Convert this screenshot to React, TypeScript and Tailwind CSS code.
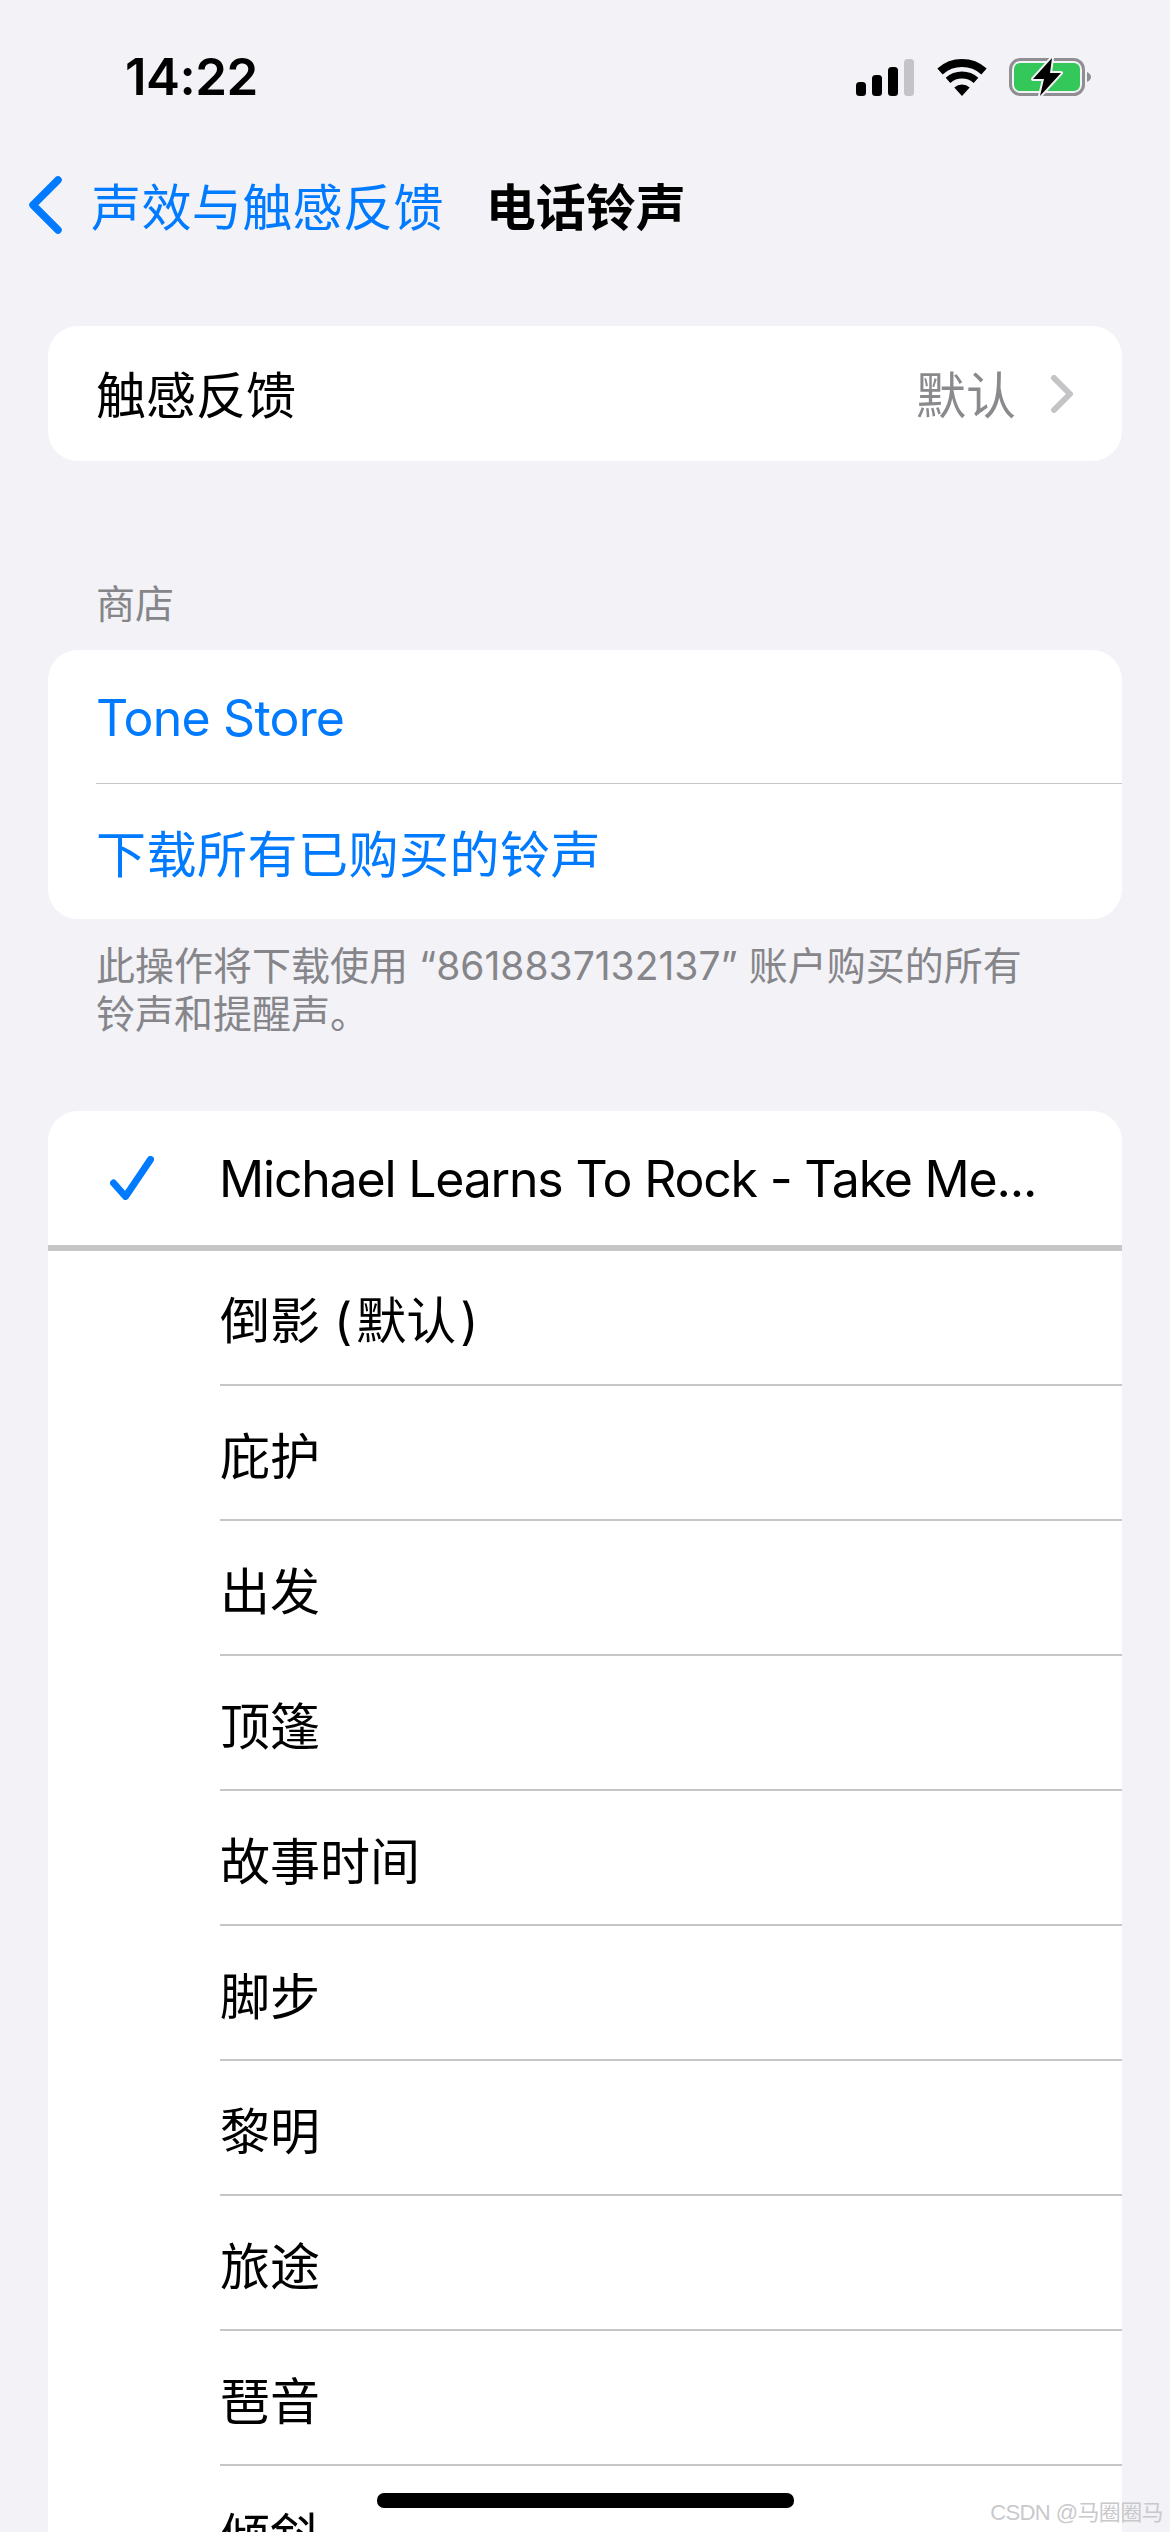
const ringtones = ['庇护', '出发', '顶篷', '故事时间', '脚步', '黎明', '旅途', '琶音', '倾斜'];

function StatusIcons() {
  return (
    <div className="flex items-center">
      <svg width="58" height="37" viewBox="0 0 58 37">
        <rect x="0" y="23" width="10" height="14" rx="3.5" fill="#000" />
        <rect x="16" y="16" width="10" height="21" rx="3.5" fill="#000" />
        <rect x="32" y="8" width="10" height="29" rx="3.5" fill="#000" />
        <rect x="48" y="0" width="10" height="37" rx="3.5" fill="#c3c3c8" />
      </svg>
      <svg className="ml-[23px]" width="50" height="37" viewBox="0 0 50 37">
        <path d="M3 12.5A33 33 0 0 1 47 12.5" fill="none" stroke="#000" strokeWidth="8" />
        <path d="M11 21.4A21 21 0 0 1 39 21.4" fill="none" stroke="#000" strokeWidth="7" />
        <path d="M25 37L17.3 28.5A11.5 11.5 0 0 1 32.7 28.5Z" fill="#000" />
      </svg>
      <svg className="ml-[22px]" width="82" height="40" viewBox="0 0 82 40">
        <rect x="1.5" y="2.5" width="73" height="35" rx="10" fill="none" stroke="#8e8e93" strokeWidth="3" />
        <rect x="5" y="6" width="66" height="28" rx="6" fill="#34c759" />
        <path d="M78 15C80.5 16 82 18 82 20S80.5 24 78 25Z" fill="#8e8e93" />
        <path
          d="M43 1L24 22H35L31 39L52 16H41Z"
          fill="#000"
          stroke="#f2f2f7"
          strokeWidth="4"
          strokeLinejoin="round"
          paintOrder="stroke"
        />
      </svg>
    </div>
  );
}

export default function App() {
  return (
    <div className="relative h-[2532px] w-[1170px] overflow-hidden bg-[#f2f2f7] font-['Inter','Noto_Sans_CJK_SC',sans-serif] text-[50px] text-black">
      {/* status bar */}
      <div className="flex h-[154px] items-center justify-between pl-[125px] pr-[79px]">
        <span className="text-[51px] font-semibold tracking-[-0.5px]">14:22</span>
        <StatusIcons />
      </div>

      {/* nav */}
      <div className="flex h-[102px] items-center pl-[28px]">
        <svg width="34" height="58" viewBox="0 0 34 58">
          <path d="M30 4L5 29L30 54" fill="none" stroke="#007aff" strokeWidth="7.5" strokeLinecap="round" strokeLinejoin="round" />
        </svg>
        <span className="ml-[29px] pt-[6px] tracking-[0.4px] text-[#007aff]">声效与触感反馈</span>
        <span className="ml-[42px] pt-[6px] font-semibold">电话铃声</span>
      </div>

      {/* haptics */}
      <div className="mx-[48px] mt-[70px] flex h-[135px] items-center justify-between rounded-[30px] bg-white pl-[48px] pr-[48px]">
        <span className="pt-[5px]">触感反馈</span>
        <div className="flex items-center">
          <span className="pt-[5px] text-[#8a8a8e]">默认</span>
          <svg className="ml-[34px]" width="24" height="38" viewBox="0 0 24 38">
            <path d="M4 3L20 19L4 35" fill="none" stroke="#c4c4c7" strokeWidth="6" strokeLinecap="round" strokeLinejoin="round" />
          </svg>
        </div>
      </div>

      {/* store */}
      <div className="ml-[96px] mt-[119px] h-[48px] text-[39px] leading-[48px] text-[#85858a]">商店</div>
      <div className="mx-[48px] mt-[22px] rounded-[30px] bg-white pl-[48px] text-[#007aff]">
        <div className="flex h-[134px] items-center border-b-[1.5px] border-[#c6c6c8] pt-[4px] tracking-[-0.8px]">Tone Store</div>
        <div className="flex h-[135px] items-center pt-[8px] tracking-[0.5px]">下载所有已购买的铃声</div>
      </div>
      <div className="ml-[96px] mt-[23px] w-[935px] text-[39px] leading-[48px] text-[#85858a]">
        此操作将下载使用 “8618837132137” 账户购买的所有铃声和提醒声。
      </div>

      {/* ringtones */}
      <div className="mx-[48px] mt-[73px] rounded-t-[30px] bg-white">
        <div className="flex h-[140px] items-center border-b-[6px] border-[#c6c6c8]">
          <svg className="ml-[62px]" width="44" height="44" viewBox="0 0 44 44">
            <path d="M3.5 27L15.5 40.5L40.5 3.5" fill="none" stroke="#007aff" strokeWidth="7" strokeLinecap="round" strokeLinejoin="round" />
          </svg>
          <span className="ml-[65px] pt-[3px] tracking-[-1.2px]">Michael Learns To Rock - Take Me...</span>
        </div>
        <div className="pl-[172px]">
          <div className="flex h-[135px] items-center border-b-2 border-[#c6c6c8] pt-[8px]">
            <span>倒影 (<span className="mx-[4px]">默认</span>)</span>
          </div>
          {ringtones.map((name) => (
            <div key={name} className="flex h-[135px] items-center border-b-2 border-[#c6c6c8] pt-[9px]">
              {name}
            </div>
          ))}
        </div>
      </div>

      {/* home indicator + watermark */}
      <div className="absolute left-[377px] top-[2493px] h-[15px] w-[417px] rounded-[7px] bg-black" />
      <div className="absolute right-[7px] top-[2498px] font-['Liberation_Sans','Noto_Sans_CJK_SC',sans-serif] text-[22px] leading-[30px] tracking-[-0.6px] text-[#c9c9cc]">
        CSDN @马圈圈马
      </div>
    </div>
  );
}
